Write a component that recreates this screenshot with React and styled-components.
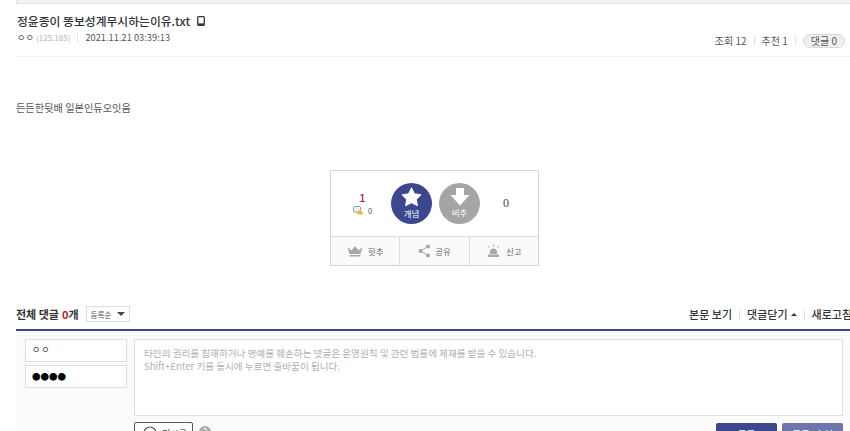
import React from 'react';
import styled, { createGlobalStyle } from 'styled-components';

const GlobalStyle = createGlobalStyle`
  html, body {
    margin: 0;
    padding: 0;
    background: #fff;
    overflow: hidden;
  }
  body {
    font-family: "Noto Sans CJK KR", "Liberation Sans", sans-serif;
    color: #333;
  }
`;

const Page = styled.div`
  width: 850px;
  height: 431px;
  overflow: hidden;
  padding-left: 16px;
  box-sizing: border-box;
`;

const TopStrip = styled.div`
  height: 3px;
  background: #f3f3f3;
  border: 1px solid #e4e4e4;
  border-top: 0;
  margin-right: -4px;
`;

const PostHead = styled.header`
  height: 53px;
  border-bottom: 1px solid #f3f3f3;
  padding: 9px 5px 0 1px;
  box-sizing: border-box;
`;

const Title = styled.h1`
  display: flex;
  align-items: center;
  gap: 7px;
  margin: 0;
  height: 15px;
  font-size: 11.8px;
  font-weight: 500;
  line-height: 15px;
  color: #333;
`;

const MetaRow = styled.div`
  display: flex;
  justify-content: space-between;
  align-items: center;
  height: 18px;
`;

const MetaLeft = styled.div`
  display: flex;
  align-items: center;
  font-size: 9.3px;
  color: #555;
`;

const Ip = styled.span`
  font-size: 8px;
  color: #b5b5b5;
  margin-left: 2px;
`;

const MetaDivider = styled.span`
  width: 1px;
  height: 9px;
  background: #e2e2e2;
  margin: 0 7px;
`;

const Stats = styled.div`
  display: flex;
  align-items: center;
  font-size: 10px;
  color: #555;
  padding-top: 7px;
`;

const CountPill = styled.span`
  height: 14px;
  line-height: 12px;
  padding: 0 7px;
  border: 1px solid #d8d8d8;
  border-radius: 8px;
  background: #efefef;
  box-sizing: border-box;
`;

const BodyText = styled.p`
  margin: 44px 0 0;
  height: 14px;
  font-size: 10.2px;
  line-height: 14px;
  color: #555;
`;

const VoteBox = styled.section`
  width: 209px;
  height: 96px;
  margin: 55px 0 0 314px;
  border: 1px solid #d5d5d5;
  box-sizing: border-box;
`;

const VoteTop = styled.div`
  display: flex;
  align-items: center;
  height: 65px;
  box-sizing: content-box;
  border-bottom: 1px solid #dcdcdc;
`;

const UpCount = styled.div`
  flex: 0 0 60px;
  display: flex;
  flex-direction: column;
  align-items: center;
  padding-left: 3px;
  box-sizing: border-box;
`;

const UpNumber = styled.strong`
  font-size: 11px;
  font-weight: 500;
  line-height: 12px;
  color: #b3261e;
`;

const FixCount = styled.div`
  display: flex;
  align-items: center;
  gap: 4px;
  font-size: 7.5px;
  line-height: 11px;
  color: #555;
  margin-top: 2px;
`;

const VoteCircle = styled.div`
  flex: 0 0 41px;
  height: 41px;
  border-radius: 50%;
  background: ${props => props.$bg};
  margin-right: ${props => props.$gap || 0}px;
  display: flex;
  flex-direction: column;
  align-items: center;
  padding-top: 4px;
  box-sizing: border-box;
  color: #fff;
  font-size: 8.5px;
  line-height: 12px;
`;

const DownCount = styled.div`
  flex: 0 0 52px;
  text-align: center;
  font-family: "Liberation Serif", serif;
  font-size: 12px;
  color: #444;
`;

const VoteBottom = styled.div`
  display: flex;
  height: 28px;
  background: #fafafa;
`;

const VoteAction = styled.div`
  flex: 1;
  display: flex;
  align-items: center;
  justify-content: center;
  gap: 5px;
  font-size: 8.5px;
  color: #666;
  & + & {
    border-left: 1px solid #dcdcdc;
  }
`;

const CommentHead = styled.div`
  display: flex;
  justify-content: space-between;
  align-items: center;
  width: 840px;
  height: 26px;
  margin-top: 39px;
  box-sizing: border-box;
  border-bottom: 2px solid #3b4890;
  padding: 0 4px 6px 0;
`;

const CommentTitle = styled.div`
  display: flex;
  align-items: center;
  font-size: 11px;
  font-weight: 700;
  color: #333;
`;

const CommentCount = styled.span`
  color: #b3261e;
  margin-left: 3px;
`;

const SortSelect = styled.div`
  display: flex;
  align-items: center;
  gap: 6px;
  height: 16px;
  margin-left: 7px;
  padding: 0 4px;
  border: 1px solid #ddd;
  box-sizing: border-box;
  font-size: 7.5px;
  font-weight: 400;
  color: #555;
`;

const Caret = styled.i`
  width: 0;
  height: 0;
  border-left: 4px solid transparent;
  border-right: 4px solid transparent;
  border-top: 4px solid #444;
`;

const CommentLinks = styled.div`
  display: flex;
  align-items: center;
  font-size: 11px;
  font-weight: 500;
  color: #333;
`;

const LinkDivider = styled.span`
  width: 1px;
  height: 9px;
  background: #ddd;
  margin: 0 7px;
`;

const UpCaret = styled.i`
  display: inline-block;
  width: 0;
  height: 0;
  margin-left: 3px;
  vertical-align: 2px;
  border-left: 3px solid transparent;
  border-right: 3px solid transparent;
  border-bottom: 3px solid #333;
`;

const FormArea = styled.div`
  display: flex;
  gap: 7px;
  width: 840px;
  padding: 8px 13px 0 9px;
  box-sizing: border-box;
  background: #fbfbfb;
  height: 110px;
`;

const Identity = styled.div`
  display: flex;
  flex-direction: column;
  gap: 3px;
  width: 102px;
`;

const IdentityField = styled.div`
  height: 23px;
  padding-left: 6px;
  border: 1px solid #dedede;
  background: #fff;
  box-sizing: border-box;
  font-size: ${props => (props.$password ? '8.5px' : '9px')};
  line-height: 20px;
  letter-spacing: ${props => (props.$password ? '0' : '1px')};
  color: ${props => (props.$password ? '#000' : '#333')};
`;

const Composer = styled.div`
  flex: 1;
  display: flex;
  flex-direction: column;
`;

const Textarea = styled.div`
  flex: 0 0 77px;
  padding: 7px 9px;
  border: 1px solid #dedede;
  background: #fff;
  box-sizing: border-box;
  font-size: 9.6px;
  line-height: 13px;
  color: #b0b0b0;
`;

const ComposerFoot = styled.div`
  display: flex;
  flex-shrink: 0;
  justify-content: space-between;
  margin-top: 6px;
`;

const FootLeft = styled.div`
  display: flex;
  align-items: flex-start;
  gap: 6px;
`;

const DcconButton = styled.div`
  display: flex;
  align-items: center;
  gap: 5px;
  width: 59px;
  height: 22px;
  padding-left: 8px;
  border: 1px solid #555;
  border-radius: 2px;
  box-sizing: border-box;
  font-size: 9px;
  color: #333;
  background: #fff;
`;

const HelpIcon = styled.span`
  width: 12px;
  height: 12px;
  margin-top: 4px;
  border-radius: 50%;
  background: #aaa;
  color: #fff;
  font-size: 9px;
  line-height: 12px;
  text-align: center;
`;

const FootRight = styled.div`
  display: flex;
  gap: 5px;
  margin-top: 1px;
`;

const SubmitButton = styled.div`
  width: 61px;
  height: 22px;
  border-radius: 2px;
  background: ${props => (props.$soft ? '#6d76ab' : '#3b4890')};
  color: #fff;
  font-size: 9.5px;
  font-weight: 500;
  line-height: 22px;
  text-align: center;
`;

const PhoneIcon = () => (
  <svg width="8" height="10" viewBox="0 0 8 10">
    <rect x="0.7" y="0.7" width="6.6" height="8.6" rx="1" fill="none" stroke="#333" strokeWidth="1.3" />
    <rect x="1" y="7.4" width="6" height="2" fill="#333" />
  </svg>
);

const CommentIcon = () => (
  <svg width="11" height="9" viewBox="0 0 11 9">
    <rect x="0.5" y="0.5" width="7" height="5.5" rx="1" fill="#eee" stroke="#999" />
    <path d="M7 3.5 L10 7 V8.5 H4.5 V7 Z" fill="#e6c030" />
  </svg>
);

const StarIcon = () => (
  <svg width="21" height="20" viewBox="0 0 24 23">
    <path
      d="M12 1.5 L15.2 8 L22.5 9 L17.2 14 L18.6 21.2 L12 17.8 L5.4 21.2 L6.8 14 L1.5 9 L8.8 8 Z"
      fill="#fff"
      stroke="#fff"
      strokeWidth="1.5"
      strokeLinejoin="round"
    />
  </svg>
);

const DownIcon = () => (
  <svg width="20" height="19" viewBox="0 0 20 19">
    <path d="M6 1 H14 V8 H19.5 L10 18.5 L0.5 8 H6 Z" fill="#fff" />
  </svg>
);

const CrownIcon = () => (
  <svg width="16" height="12" viewBox="0 0 16 12">
    <path d="M0.5 2 L4.5 5.5 L8 1 L11.5 5.5 L15.5 2 L13.5 9 H2.5 Z" fill="#a8a8a8" />
    <rect x="2.5" y="10" width="11" height="1.5" fill="#a8a8a8" />
  </svg>
);

const ShareIcon = () => (
  <svg width="12" height="14" viewBox="0 0 12 14">
    <path d="M10 2.5 L2.5 7 L10 11.5" fill="none" stroke="#a5a5a5" strokeWidth="1" />
    <circle cx="10" cy="2.5" r="2" fill="#a5a5a5" />
    <circle cx="2.5" cy="7" r="2" fill="#a5a5a5" />
    <circle cx="10" cy="11.5" r="2" fill="#a5a5a5" />
  </svg>
);

const SirenIcon = () => (
  <svg width="15" height="14" viewBox="0 0 15 14">
    <path d="M4 10 V8 A3.5 3.5 0 0 1 11 8 V10 Z" fill="#a8a8a8" />
    <rect x="2" y="10.5" width="11" height="2.5" fill="#a8a8a8" />
    <path d="M7.5 0.5 V3 M2 2 L3.6 3.8 M13 2 L11.4 3.8" stroke="#b5b5b5" strokeWidth="1" />
  </svg>
);

const SmileIcon = () => (
  <svg width="14" height="14" viewBox="0 0 14 14">
    <circle cx="7" cy="7" r="6" fill="none" stroke="#555" strokeWidth="1.2" />
    <path d="M4 8.5 Q7 11 10 8.5" fill="none" stroke="#555" />
  </svg>
);

const App = () => (
  <>
    <GlobalStyle />
    <Page>
      <TopStrip />
      <PostHead>
        <Title>
          정윤종이 똥보성계무시하는이유.txt
          <PhoneIcon />
        </Title>
        <MetaRow>
          <MetaLeft>
            ㅇㅇ<Ip>(125.185)</Ip>
            <MetaDivider />
            2021.11.21 03:39:13
          </MetaLeft>
          <Stats>
            조회 12
            <MetaDivider />
            추천 1
            <MetaDivider />
            <CountPill>댓글 0</CountPill>
          </Stats>
        </MetaRow>
      </PostHead>
      <BodyText>든든한뒷배 일본인듀오잇음</BodyText>
      <VoteBox>
        <VoteTop>
          <UpCount>
            <UpNumber>1</UpNumber>
            <FixCount>
              <CommentIcon />0
            </FixCount>
          </UpCount>
          <VoteCircle $bg="#3b4890" $gap={7}>
            <StarIcon />
            개념
          </VoteCircle>
          <VoteCircle $bg="#a5a5a5">
            <DownIcon />
            비추
          </VoteCircle>
          <DownCount>0</DownCount>
        </VoteTop>
        <VoteBottom>
          <VoteAction>
            <CrownIcon />힛추
          </VoteAction>
          <VoteAction>
            <ShareIcon />공유
          </VoteAction>
          <VoteAction>
            <SirenIcon />신고
          </VoteAction>
        </VoteBottom>
      </VoteBox>
      <CommentHead>
        <CommentTitle>
          전체 댓글<CommentCount>0</CommentCount>개
          <SortSelect>
            등록순 <Caret />
          </SortSelect>
        </CommentTitle>
        <CommentLinks>
          본문 보기
          <LinkDivider />
          댓글닫기<UpCaret />
          <LinkDivider />
          새로고침
        </CommentLinks>
      </CommentHead>
      <FormArea>
        <Identity>
          <IdentityField>ㅇㅇ</IdentityField>
          <IdentityField $password>●●●●</IdentityField>
        </Identity>
        <Composer>
          <Textarea>
            타인의 권리를 침해하거나 명예를 훼손하는 댓글은 운영원칙 및 관련 법률에 제재를 받을 수 있습니다.
            <br />
            Shift+Enter 키를 동시에 누르면 줄바꿈이 됩니다.
          </Textarea>
          <ComposerFoot>
            <FootLeft>
              <DcconButton>
                <SmileIcon />
                디시콘
              </DcconButton>
              <HelpIcon>?</HelpIcon>
            </FootLeft>
            <FootRight>
              <SubmitButton>등록</SubmitButton>
              <SubmitButton $soft>등록+추천</SubmitButton>
            </FootRight>
          </ComposerFoot>
        </Composer>
      </FormArea>
    </Page>
  </>
);

export default App;
